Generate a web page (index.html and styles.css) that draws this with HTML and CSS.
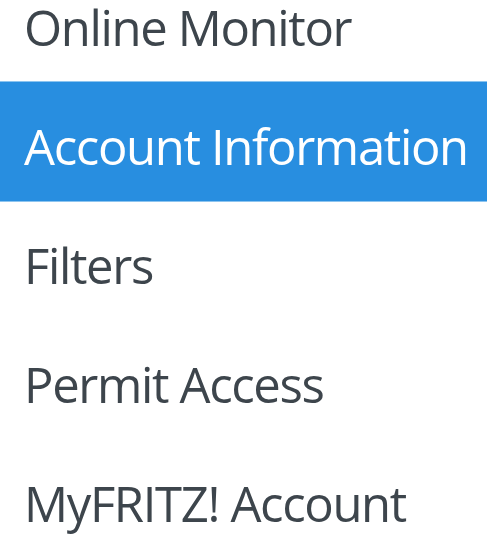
FILE: index.html
```html
<!DOCTYPE html>
<html lang="en">
<head>
    <meta charset="UTF-8">
    <meta name="viewport" content="width=device-width, initial-scale=1.0">
    <title>Internet</title>
    <link rel="stylesheet" href="styles.css">
</head>
<body>
    <ul class="menu">
        <li><a href="#">Online Monitor</a></li>
        <li class="active"><a href="#">Account Information</a></li>
        <li><a href="#">Filters</a></li>
        <li><a href="#">Permit Access</a></li>
        <li><a href="#">MyFRITZ! Account</a></li>
    </ul>
</body>
</html>
```

FILE: styles.css
```css
body {
    margin: 0;
    padding: 0;
    background-color: #fff;
    font-family: "Open Sans", sans-serif;
    overflow: hidden;
}

.menu {
    list-style: none;
    margin: -37px 0 0 0;
    padding: 0;
}

.menu li a {
    display: block;
    height: 119px;
    box-sizing: border-box;
    padding: 34px 24px 0 24px;
    font-size: 49px;
    line-height: 60px;
    letter-spacing: -1.35px;
    color: #3d454c;
    text-decoration: none;
    white-space: nowrap;
}

.menu li.active a {
    background-color: #288ee0;
    border-top: 1px solid #8cc4ef;
    border-bottom: 1px solid #8cc4ef;
    height: 121px;
    margin: -1px 0;
    color: #fff;
}
```
